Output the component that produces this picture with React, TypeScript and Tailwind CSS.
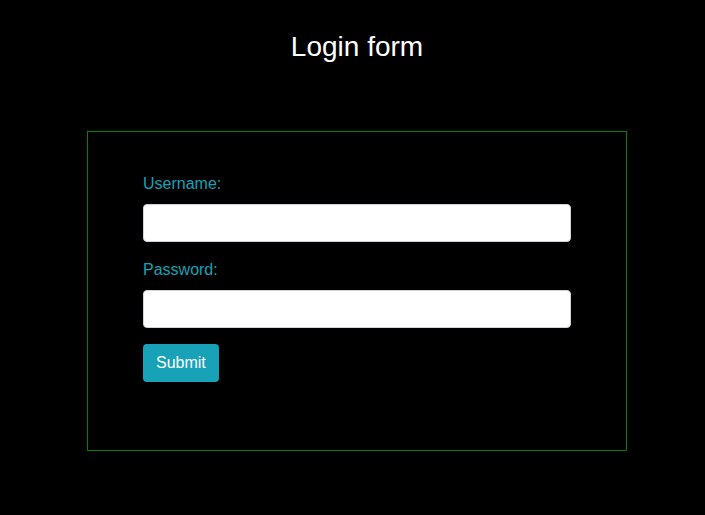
import React from "react";

function Field({ label, type }: { label: string; type: string }) {
  return (
    <div className="flex flex-col">
      <label className="text-[16px] leading-[24px] text-[#17a2b8] mb-[8px]">{label}</label>
      <input
        type={type}
        className="w-full h-[38px] rounded-[4px] border border-[#ced4da] bg-white px-3 outline-none"
      />
    </div>
  );
}

export default function App() {
  return (
    <div className="min-h-[515px] w-full bg-black font-['Liberation_Sans',Arial,sans-serif]">
      <div className="ml-[87px] w-[540px] pt-[30px]">
        <h1 className="text-center text-white text-[28px] leading-[34px] font-normal">Login form</h1>
        <form className="mt-[67px] h-[320px] border border-[#008000] px-[55px] pt-[40px] flex flex-col">
          <Field label="Username:" type="text" />
          <div className="mt-[16px]">
            <Field label="Password:" type="password" />
          </div>
          <div className="mt-[16px]">
            <button
              type="button"
              className="h-[38px] px-[13px] rounded-[4px] bg-[#17a2b8] text-white text-[16px]"
            >
              Submit
            </button>
          </div>
        </form>
      </div>
    </div>
  );
}
